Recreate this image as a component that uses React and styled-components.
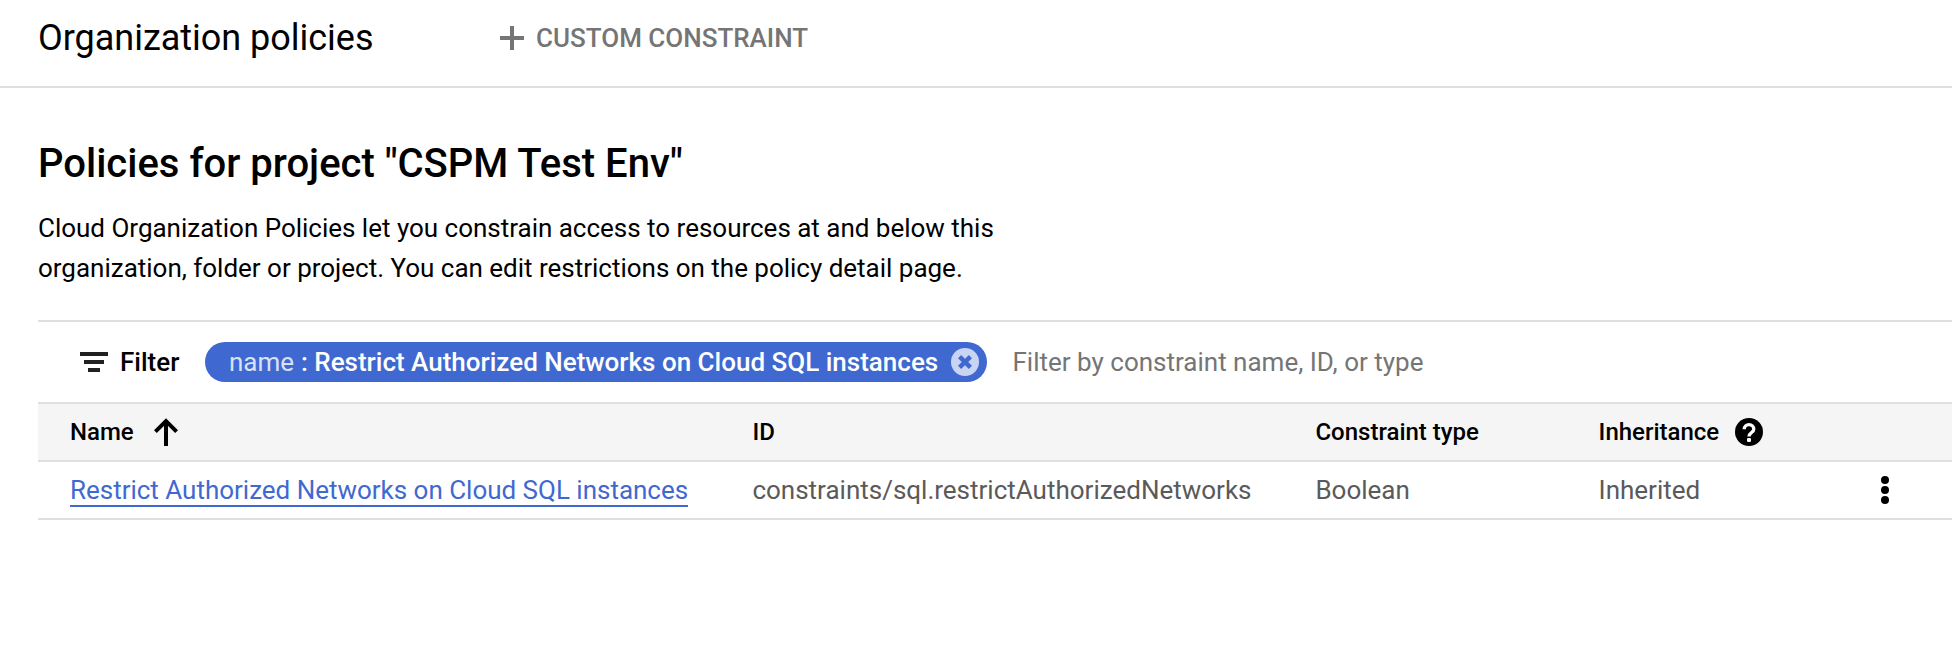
import React from 'react';
import styled, { createGlobalStyle } from 'styled-components';

const GlobalStyle = createGlobalStyle`
  *, *::before, *::after { box-sizing: border-box; }
  body { margin: 0; background: #fff; color: #000; font-family: Roboto, sans-serif; font-size: 26px; }
  svg { display: block; flex: none; }
  button { font: inherit; border: 0; background: none; padding: 0; }
`;

const Page = styled.div`
  min-height: 646px;
  overflow: hidden;
`;

const TopBar = styled.header`
  display: flex;
  align-items: center;
  height: 88px;
  padding: 0 38px 10px;
  border-bottom: 2px solid #e0e0e0;
`;

const PageTitle = styled.h1`
  margin: 0;
  width: 462px;
  font-size: 36px;
  font-weight: 400;
  line-height: 48px;
  letter-spacing: -0.02px;
`;

const ActionButton = styled.button`
  display: flex;
  align-items: center;
  gap: 12px;
  color: #757575;
  font-weight: 500;
  line-height: 32px;
`;

const Content = styled.main`
  padding: 52px 0 0 38px;
`;

const Heading = styled.h2`
  margin: 0 0 20px;
  font-size: 40px;
  font-weight: 500;
  line-height: 48px;
`;

const Description = styled.p`
  margin: 0 0 32px;
  width: 980px;
  line-height: 40px;
  letter-spacing: -0.012px;
`;

const FilterBar = styled.div`
  display: flex;
  align-items: center;
  height: 82px;
  padding-left: 42px;
  border-top: 2px solid #e0e0e0;
  line-height: 32px;
`;

const FilterLabel = styled.div`
  display: flex;
  align-items: center;
  gap: 12px;
  width: 125px;
  font-weight: 500;
`;

const Chip = styled.div`
  display: flex;
  align-items: center;
  justify-content: space-between;
  width: 782px;
  height: 40px;
  padding: 0 8px 0 24px;
  border-radius: 20px;
  background: #3f69d0;
  color: #fff;
  font-weight: 500;
  white-space: nowrap;
`;

const ChipKey = styled.span`
  margin-right: 0.4px;
  font-weight: 400;
  color: #d9e1f6;
`;

const FilterInput = styled.input`
  flex: 1;
  margin-left: 25.5px;
  padding: 0;
  border: 0;
  outline: 0;
  background: none;
  font: inherit;
  line-height: 32px;
  &::placeholder { color: #757575; opacity: 1; }
`;

const Row = styled.div`
  display: grid;
  grid-template-columns: 682.4px 563px 283.2px 282.4px 1fr;
  align-items: center;
  height: ${(p) => (p.$head ? 60 : 58)}px;
  padding-left: 32px;
  border-top: ${(p) => (p.$head ? '2px solid #e0e0e0' : '0')};
  border-bottom: 2px solid #e0e0e0;
  background: ${(p) => (p.$head ? '#f5f5f5' : '#fff')};
  color: ${(p) => (p.$head ? '#000' : '#5a5a5a')};
  font-size: ${(p) => (p.$head ? 24 : 26)}px;
  font-weight: ${(p) => (p.$head ? 500 : 400)};
  line-height: 32px;
`;

const Cell = styled.div`
  display: flex;
  align-items: center;
  gap: ${(p) => p.$gap || 0}px;
  white-space: nowrap;
`;

const PolicyLink = styled.a`
  margin-top: 2px;
  height: 32px;
  line-height: 30px;
  letter-spacing: -0.015px;
  border-bottom: 2px solid #3f69d0;
  color: #3f69d0;
  text-decoration: none;
`;

const PlusIcon = () => (
  <svg width="24" height="24" viewBox="0 0 24 24" fill="currentColor">
    <path d="M10 0h4v10h10v4H14v10h-4V14H0v-4h10z" />
  </svg>
);

const FilterIcon = () => (
  <svg width="28" height="20" viewBox="0 0 28 20" fill="#212121">
    <path d="M0 0h28v4H0zM4 8h20v4H4zM8 16h12v4H8z" />
  </svg>
);

const ClearIcon = () => (
  <svg width="28" height="28" viewBox="0 0 28 28">
    <circle cx="14" cy="14" r="14" fill="#c9d4f2" />
    <path d="M8.6 8.6l10.8 10.8M19.4 8.6L8.6 19.4" stroke="#3f69d0" strokeWidth="4.4" />
  </svg>
);

const SortUpIcon = () => (
  <svg width="24" height="28" viewBox="0 0 24 28" fill="none" stroke="#000" strokeWidth="4">
    <path d="M12 28V4M1.4 13.6L12 3l10.6 10.6" />
  </svg>
);

const HelpIcon = () => (
  <svg width="28" height="28" viewBox="0 0 28 28">
    <circle cx="14" cy="14" r="14" fill="#000" />
    <path d="M9.2 11.2a4.8 4.6 0 0 1 9.6 0c0 3.2-4.8 3.4-4.8 7.2" fill="none" stroke="#fff" strokeWidth="3.3" />
    <rect x="12" y="20" width="4" height="4" rx="1.2" fill="#fff" />
  </svg>
);

const MoreIcon = () => (
  <svg width="8" height="28" viewBox="0 0 8 28" fill="#000">
    <circle cx="4" cy="4" r="4" />
    <circle cx="4" cy="14" r="4" />
    <circle cx="4" cy="24" r="4" />
  </svg>
);

export default function App() {
  return (
    <Page>
      <GlobalStyle />
      <TopBar>
        <PageTitle>Organization policies</PageTitle>
        <ActionButton>
          <PlusIcon />
          CUSTOM CONSTRAINT
        </ActionButton>
      </TopBar>
      <Content>
        <Heading>Policies for project "CSPM Test Env"</Heading>
        <Description>
          Cloud Organization Policies let you constrain access to resources at and below this
          organization, folder or project. You can edit restrictions on the policy detail page.
        </Description>
        <FilterBar>
          <FilterLabel>
            <FilterIcon />
            Filter
          </FilterLabel>
          <Chip>
            <span>
              <ChipKey>name</ChipKey> : Restrict Authorized Networks on Cloud SQL instances
            </span>
            <ClearIcon />
          </Chip>
          <FilterInput placeholder="Filter by constraint name, ID, or type" />
        </FilterBar>
        <Row $head>
          <Cell $gap={20}>
            Name
            <SortUpIcon />
          </Cell>
          <Cell>ID</Cell>
          <Cell>Constraint type</Cell>
          <Cell $gap={15.8}>
            Inheritance
            <HelpIcon />
          </Cell>
        </Row>
        <Row>
          <Cell>
            <PolicyLink href="#">Restrict Authorized Networks on Cloud SQL instances</PolicyLink>
          </Cell>
          <Cell>constraints/sql.restrictAuthorizedNetworks</Cell>
          <Cell>Boolean</Cell>
          <Cell>Inherited</Cell>
          <Cell as="button" aria-label="More actions">
            <MoreIcon />
          </Cell>
        </Row>
      </Content>
    </Page>
  );
}
